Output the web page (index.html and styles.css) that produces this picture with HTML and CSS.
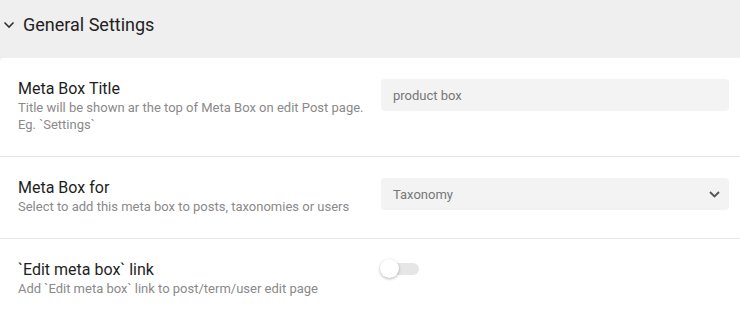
FILE: index.html
```html
<!DOCTYPE html>
<html lang="en">
<head>
  <meta charset="UTF-8" />
  <meta name="viewport" content="width=device-width, initial-scale=1.0"/>
  <title>General Settings</title>
  <link rel="stylesheet" href="styles.css">
</head>
<body>

<div class="panel">
  <!-- Заголовок секции -->
  <div class="panel-head">
    <svg class="caret" width="12" height="8" viewBox="0 0 12 8">
      <path d="M1.5 1.5 L6 6 L10.5 1.5" fill="none" stroke="#333" stroke-width="1.6"/>
    </svg>
    <span>General Settings</span>
  </div>

  <div class="panel-body">
    <div class="field">
      <div class="field-info">
        <div class="field-label">Meta Box Title</div>
        <div class="field-desc">Title will be shown ar the top of Meta Box on edit Post page. Eg. `Settings`</div>
      </div>
      <div class="field-control">
        <input type="text" class="text-input" value="product box" />
      </div>
    </div>

    <div class="field">
      <div class="field-info">
        <div class="field-label">Meta Box for</div>
        <div class="field-desc">Select to add this meta box to posts, taxonomies or users</div>
      </div>
      <div class="field-control">
        <div class="select">
          <span>Taxonomy</span>
          <svg width="11" height="7" viewBox="0 0 11 7">
            <path d="M1 1 L5.5 5.5 L10 1" fill="none" stroke="#555" stroke-width="1.8"/>
          </svg>
        </div>
      </div>
    </div>

    <div class="field">
      <div class="field-info">
        <div class="field-label">`Edit meta box` link</div>
        <div class="field-desc">Add `Edit meta box` link to post/term/user edit page</div>
      </div>
      <div class="field-control">
        <span class="toggle"><span class="knob"></span></span>
      </div>
    </div>
  </div>
</div>

</body>
</html>
```

FILE: styles.css
```css
body {
  margin: 0;
  font-family: Roboto, "Liberation Sans", Arial, sans-serif;
  background-color: #efefef;
  color: #222;
}
.panel-head {
  height: 58px;
  box-sizing: border-box;
  padding: 13px 0 0 3px;
  display: flex;
  align-items: flex-start;
  font-size: 18px;
  line-height: 24px;
  color: #222;
}
.caret {
  margin: 8px 8px 0 0;
}
.panel-body {
  background-color: #fff;
  border-top-left-radius: 3px;
  height: 252px;
}
.field {
  display: flex;
  gap: 14px;
  padding: 21px 11px 23px 18px;
  border-bottom: 1px solid #e6e6e6;
}
.field:last-child {
  border-bottom: none;
}
.field-info {
  flex: 1;
}
.field-label {
  font-size: 16px;
  line-height: 20px;
  color: #1e1e1e;
}
.field-desc {
  font-size: 13px;
  line-height: 17px;
  color: #8a8a8a;
}
.field-control {
  width: 348px;
}
.text-input, .select {
  width: 100%;
  height: 32px;
  box-sizing: border-box;
  border: none;
  border-radius: 4px;
  background-color: #f3f3f3;
  padding: 0 12px;
  font-family: inherit;
  font-size: 13px;
  color: #777;
  outline: none;
}
.select {
  display: flex;
  align-items: center;
  justify-content: space-between;
  padding-right: 9px;
}
.toggle {
  display: block;
  position: relative;
  width: 34px;
  height: 12px;
  margin: 3px 0 0 4px;
  border-radius: 6px;
  background-color: #e6e6e6;
}
.knob {
  position: absolute;
  left: -5px;
  top: -4px;
  width: 19px;
  height: 19px;
  border-radius: 50%;
  background-color: #fff;
  box-shadow: 0 1px 3px rgba(0, 0, 0, 0.3);
}
```
